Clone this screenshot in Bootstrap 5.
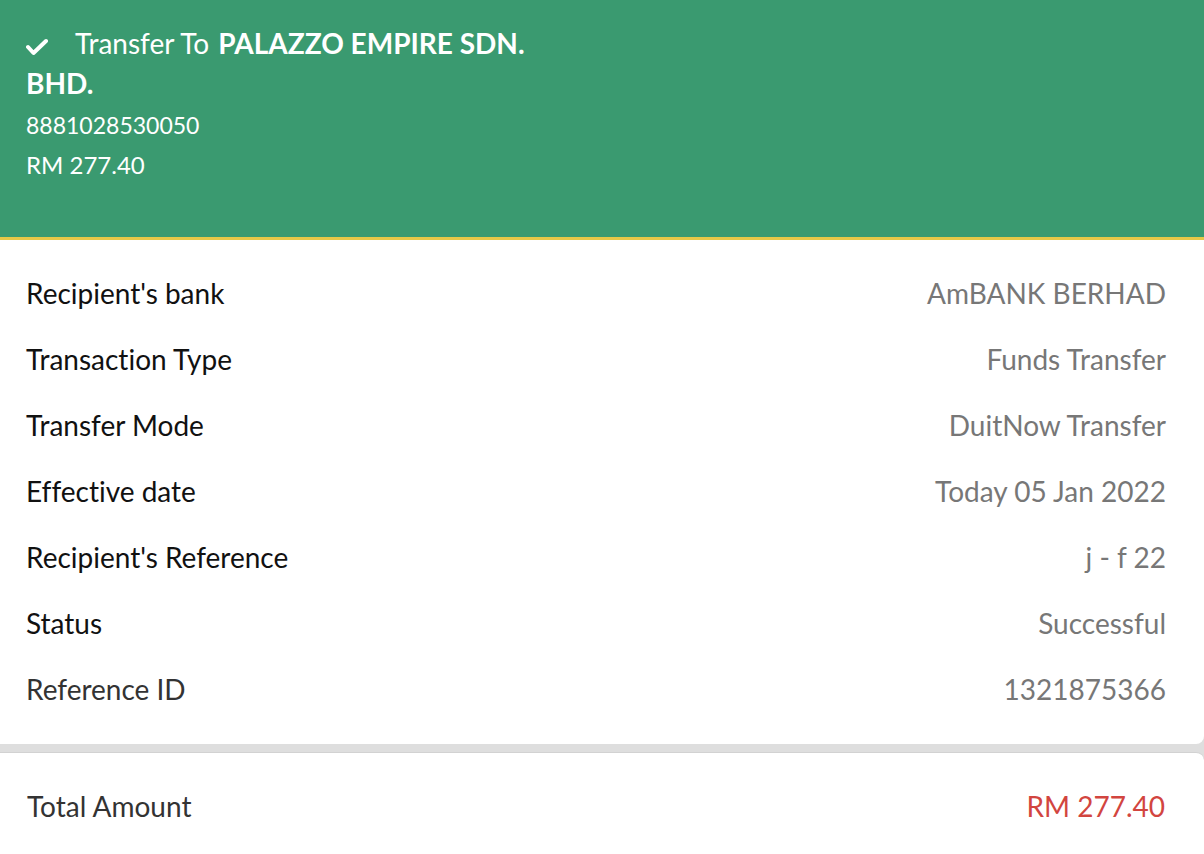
<!DOCTYPE html>
<html lang="en">
<head>
<meta charset="utf-8">
<meta name="viewport" content="width=device-width, initial-scale=1">
<title>Transfer receipt</title>
<link href="https://cdn.jsdelivr.net/npm/bootstrap@5.3.0/dist/css/bootstrap.min.css" rel="stylesheet">
<style>
body { font-family: Lato, sans-serif; font-size: 28px; line-height: 40px; font-variant-ligatures: none; background: #dedede; color: #111; }
.receipt-head { background: #3a9a70; border-bottom: 3px solid #e6c848; padding: 23px 26px 52px; }
.payee { max-width: 540px; font-size: 28px; line-height: 40px; }
.payee-check { width: 22px; height: 18px; margin-right: 27px; }
.payee-to { margin-right: 2px; }
.payee-meta { padding-top: 2px; font-size: 24px; line-height: 40px; }
.payee-account { font-size: 23px; }
.details { background: #fff; padding: 20px 38px 22px 26px; border-bottom-right-radius: 8px; }
.detail-row { padding: 13px 0; }
.detail-value { color: #777; }
.soft { color: #333; }
.total { background: #fff; margin-top: 8px; border-top: 1px solid #d2d2d2; padding: 33px 39px 33px 27px; border-top-right-radius: 8px; }
.total-value { color: #d2453f; }
</style>
</head>
<body class="min-vh-100 d-flex flex-column">
<header class="receipt-head text-white">
  <h1 class="payee fw-normal mb-0"><svg class="payee-check" viewBox="0 0 22 18" fill="none" stroke="#fff" stroke-width="4" stroke-linecap="round" stroke-linejoin="round" aria-hidden="true"><path d="M2 9l5.500 6L20 3"/></svg><span class="payee-to">Transfer To</span> <strong>PALAZZO EMPIRE SDN. BHD.</strong></h1>
  <div class="payee-meta">
    <div class="payee-account">8881028530050</div>
    <div>RM 277.40</div>
  </div>
</header>
<main class="d-flex flex-column flex-grow-1">
  <dl class="details mb-0">
    <div class="detail-row d-flex justify-content-between"><dt class="fw-normal">Recipient's bank</dt><dd class="detail-value mb-0">AmBANK BERHAD</dd></div>
    <div class="detail-row d-flex justify-content-between"><dt class="fw-normal">Transaction Type</dt><dd class="detail-value mb-0">Funds Transfer</dd></div>
    <div class="detail-row d-flex justify-content-between"><dt class="fw-normal">Transfer Mode</dt><dd class="detail-value mb-0">DuitNow Transfer</dd></div>
    <div class="detail-row d-flex justify-content-between"><dt class="fw-normal">Effective date</dt><dd class="detail-value mb-0">Today 05 Jan 2022</dd></div>
    <div class="detail-row d-flex justify-content-between"><dt class="fw-normal">Recipient's Reference</dt><dd class="detail-value mb-0">j - f 22</dd></div>
    <div class="detail-row d-flex justify-content-between"><dt class="fw-normal">Status</dt><dd class="detail-value mb-0">Successful</dd></div>
    <div class="detail-row d-flex justify-content-between"><dt class="fw-normal soft">Reference ID</dt><dd class="detail-value mb-0">1321875366</dd></div>
  </dl>
  <section class="total flex-grow-1 d-flex justify-content-between">
    <span class="soft">Total Amount</span><span class="total-value">RM 277.40</span>
  </section>
</main>
<script src="https://cdn.jsdelivr.net/npm/bootstrap@5.3.0/dist/js/bootstrap.bundle.min.js"></script>
</body>
</html>
